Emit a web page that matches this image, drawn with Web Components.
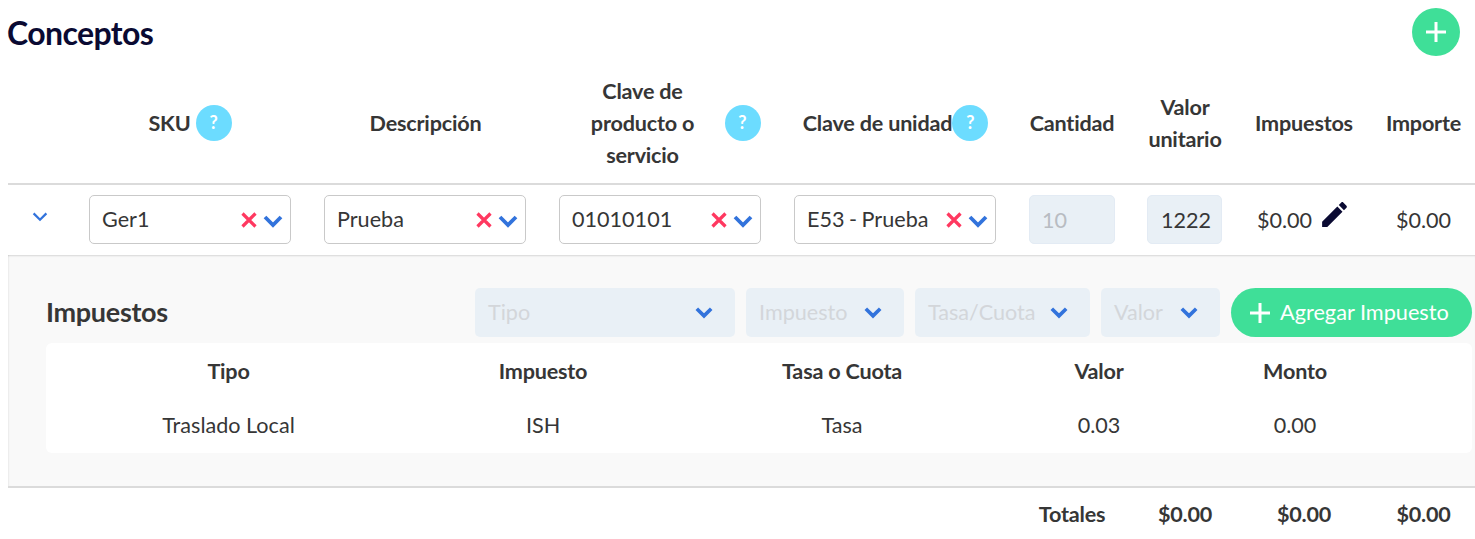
<!DOCTYPE html>
<html lang="es">
<head>
<meta charset="utf-8">
<title>Conceptos</title>
<style>
  html, body { margin: 0; background: #fff; }
  body {
    padding-left: 8px;
    font-family: Lato, "Open Sans", sans-serif;
    color: #363636;
    --cols: 65px 235px 235px 235px 235px 118px 108px 130px 106px;
  }
</style>
</head>
<body>
<concept-title>Conceptos</concept-title>
<concept-head></concept-head>
<concept-row></concept-row>
<tax-panel></tax-panel>
<concept-totals></concept-totals>

<script>
const chevron = (w, sw) => `<svg class="chev" width="${w}" height="${w * 0.7}" viewBox="0 0 20 14" fill="none" stroke="#3273dc" stroke-width="${sw}"><path d="M2 3l8 8 8-8"/></svg>`;

class ConceptTitle extends HTMLElement {
  connectedCallback() {
    const shadow = this.attachShadow({mode: "open"});
    shadow.innerHTML = `
    <style>
      :host { display: flex; justify-content: space-between; align-items: center; height: 64px; padding-right: 15px; box-sizing: border-box; }
      h1 { margin: 0 0 0 -1px; font-size: 32px; font-weight: 700; letter-spacing: -0.6px; color: #0a0a32; }
      .add { width: 48px; height: 48px; border-radius: 50%; background: #3fdf98; display: flex; align-items: center; justify-content: center; }
    </style>
    <h1><slot></slot></h1>
    <div class="add"><svg width="20" height="20" viewBox="0 0 20 20" stroke="#fff" stroke-width="3"><path d="M10 0v20M0 10h20"/></svg></div>`;
  }
}
customElements.define('concept-title', ConceptTitle);

class HelpBadge extends HTMLElement {
  connectedCallback() {
    const shadow = this.attachShadow({mode: "open"});
    shadow.innerHTML = `
    <style>
      :host { display: inline-flex; width: 36px; height: 36px; flex: none; border-radius: 50%; background: #6cdcff; color: #fff; align-items: center; justify-content: center; font-size: 18px; font-weight: 700; letter-spacing: 0; }
      span { position: relative; top: -1px; }
    </style>
    <span>?</span>`;
  }
}
customElements.define('help-badge', HelpBadge);

class ConceptHead extends HTMLElement {
  connectedCallback() {
    const shadow = this.attachShadow({mode: "open"});
    shadow.innerHTML = `
    <style>
      :host { display: grid; grid-template-columns: var(--cols); height: 121px; box-sizing: border-box; border-bottom: 2px solid #dbdbdb; font-size: 21.6px; font-weight: 700; letter-spacing: -0.2px; line-height: 32px; text-align: center; color: #363636; }
      div { display: flex; align-items: center; justify-content: center; padding-bottom: 1px; }
      .sku { gap: 5px; padding-right: 1px; }
      .clave { gap: 18px; padding-left: 18px; }
      .clave span { width: 128px; }
      .unidad { padding: 0 16px 1px; white-space: nowrap; }
      .last { padding-left: 3px; }
    </style>
    <div></div>
    <div class="sku">SKU <help-badge></help-badge></div>
    <div>Descripción</div>
    <div class="clave"><span>Clave de producto o servicio</span><help-badge></help-badge></div>
    <div class="unidad">Clave de unidad<help-badge></help-badge></div>
    <div>Cantidad</div>
    <div><span>Valor<br>unitario</span></div>
    <div>Impuestos</div>
    <div class="last">Importe</div>`;
  }
}
customElements.define('concept-head', ConceptHead);

class ComboBox extends HTMLElement {
  connectedCallback() {
    const shadow = this.attachShadow({mode: "open"});
    shadow.innerHTML = `
    <style>
      :host { display: flex; align-items: center; height: 49px; box-sizing: border-box; border: 1px solid #c9c9c9; border-radius: 5px; padding: 0 7px 0 12px; font-size: 21.6px; color: #363636; background: #fff; }
      .val { flex: 1; white-space: nowrap; word-spacing: -1px; margin-top: -2px; }
      svg { display: block; }
      .x { margin-right: 6px; }
      .chev { position: relative; top: 1px; }
    </style>
    <span class="val"><slot></slot></span>
    <svg class="x" width="16" height="16" viewBox="0 0 16 16" stroke="#ff3860" stroke-width="3.2" fill="none"><path d="M1.5 1.5l13 13M14.5 1.5l-13 13"/></svg>
    ${chevron(20, 3.8)}`;
  }
}
customElements.define('combo-box', ComboBox);

class NumField extends HTMLElement {
  connectedCallback() {
    const shadow = this.attachShadow({mode: "open"});
    shadow.innerHTML = `
    <style>
      :host { display: flex; align-items: center; height: 49px; box-sizing: border-box; border: 1px solid #e3ebf4; border-radius: 5px; padding-left: 13px; font-size: 21.6px; background: #e9f0f6; color: #363636; }
      :host([muted]) { color: #b8bcc2; padding-left: 12px; }
    </style>
    <slot></slot>`;
  }
}
customElements.define('num-field', NumField);

class ConceptRow extends HTMLElement {
  connectedCallback() {
    const shadow = this.attachShadow({mode: "open"});
    shadow.innerHTML = `
    <style>
      :host { display: grid; grid-template-columns: var(--cols); height: 70px; padding-top: 10px; box-sizing: border-box; font-size: 21.6px; color: #363636; }
      .cell { padding: 0 17px 0 16px; }
      .qty { padding-right: 16px; }
      .exp { display: flex; justify-content: center; padding: 16px 1px 0 0; }
      .txt { display: flex; align-items: center; justify-content: center; height: 49px; }
      .imp { gap: 10px; padding-right: 4px; }
      .pen { position: relative; top: -5px; margin: -4px; }
      .last { padding-left: 3px; }
    </style>
    <div class="exp">${chevron(16, 2.8)}</div>
    <div class="cell"><combo-box>Ger1</combo-box></div>
    <div class="cell"><combo-box>Prueba</combo-box></div>
    <div class="cell"><combo-box>01010101</combo-box></div>
    <div class="cell"><combo-box>E53 - Prueba</combo-box></div>
    <div class="cell qty"><num-field muted>10</num-field></div>
    <div class="cell"><num-field>1222</num-field></div>
    <div class="txt imp">$0.00 <svg class="pen" width="33" height="33" viewBox="0 0 24 24" fill="#0a0a32"><path d="M3 17.25V21h3.75L17.81 9.94l-3.75-3.75L3 17.25zM20.71 7.04c.39-.39.39-1.02 0-1.41l-2.34-2.34c-.39-.39-1.02-.39-1.41 0l-1.83 1.83 3.75 3.75 1.83-1.83z"/></svg></div>
    <div class="txt last">$0.00</div>`;
  }
}
customElements.define('concept-row', ConceptRow);

class TaxSelect extends HTMLElement {
  connectedCallback() {
    const shadow = this.attachShadow({mode: "open"});
    shadow.innerHTML = `
    <style>
      :host { display: flex; align-items: center; justify-content: space-between; height: 49px; box-sizing: border-box; border-radius: 5px; padding: 0 22px 0 13px; background: #e9f0f6; color: #d3d6da; font-size: 21.6px; }
      span { margin-top: -2px; }
    </style>
    <span><slot></slot></span>${chevron(18, 4)}`;
  }
}
customElements.define('tax-select', TaxSelect);

class TaxTable extends HTMLElement {
  connectedCallback() {
    const shadow = this.attachShadow({mode: "open"});
    shadow.innerHTML = `
    <style>
      :host { display: grid; grid-template-columns: 365px 264px 334px 180px 212px 71px; grid-auto-rows: 54px; height: 110px; padding-top: 1px; box-sizing: border-box; background: #fff; border-radius: 6px; font-size: 21.6px; text-align: center; align-items: center; color: #363636; }
      b { font-weight: 700; letter-spacing: -0.2px; }
    </style>
    <b>Tipo</b><b>Impuesto</b><b>Tasa o Cuota</b><b>Valor</b><b>Monto</b><span></span>
    <span>Traslado Local</span><span>ISH</span><span>Tasa</span><span>0.03</span><span>0.00</span><span></span>`;
  }
}
customElements.define('tax-table', TaxTable);

class TaxPanel extends HTMLElement {
  connectedCallback() {
    const shadow = this.attachShadow({mode: "open"});
    shadow.innerHTML = `
    <style>
      :host { display: block; height: 233px; box-sizing: border-box; padding: 33px 3px 0 38px; background: #f9f9f9; border-bottom: 2px solid #dbdbdb; box-shadow: inset 0 2px 2px -1px rgba(0,0,0,.14), inset 2px 0 2px -1px rgba(0,0,0,.06); }
      .top { display: flex; align-items: center; gap: 11px; height: 49px; margin-bottom: 6px; }
      h2 { margin: -2px 0 0; flex: 1; font-size: 27px; font-weight: 700; letter-spacing: -0.3px; color: #363636; }
      .btn { display: flex; align-items: center; gap: 10px; padding-left: 19px; box-sizing: border-box; width: 241px; height: 49px; border-radius: 25px; background: #3fdf98; color: #fff; font-size: 21.7px; }
      .btn span { margin-top: -2px; }
    </style>
    <div class="top">
      <h2>Impuestos</h2>
      <tax-select style="width:260px">Tipo</tax-select>
      <tax-select style="width:158px">Impuesto</tax-select>
      <tax-select style="width:175px">Tasa/Cuota</tax-select>
      <tax-select style="width:119px">Valor</tax-select>
      <div class="btn"><svg width="20" height="20" viewBox="0 0 20 20" stroke="#fff" stroke-width="3"><path d="M10 0v20M0 10h20"/></svg><span>Agregar Impuesto</span></div>
    </div>
    <tax-table></tax-table>`;
  }
}
customElements.define('tax-panel', TaxPanel);

class ConceptTotals extends HTMLElement {
  connectedCallback() {
    const shadow = this.attachShadow({mode: "open"});
    shadow.innerHTML = `
    <style>
      :host { display: grid; grid-template-columns: var(--cols); height: 50px; padding-top: 2px; box-sizing: border-box; font-size: 21.6px; font-weight: 700; letter-spacing: -0.2px; text-align: center; align-items: center; color: #363636; }
      .lbl { grid-column: 6; }
      .last { padding-left: 3px; }
    </style>
    <span class="lbl">Totales</span><span>$0.00</span><span>$0.00</span><span class="last">$0.00</span>`;
  }
}
customElements.define('concept-totals', ConceptTotals);
</script>
</body>
</html>
